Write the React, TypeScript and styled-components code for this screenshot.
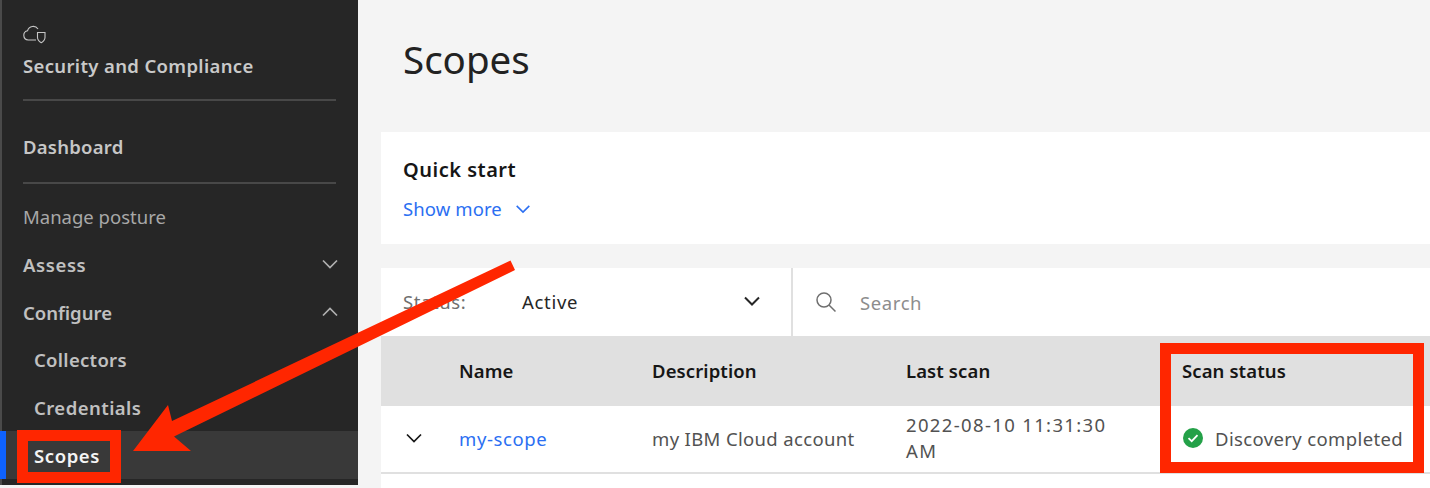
import React from 'react';
import styled, { createGlobalStyle } from 'styled-components';

const Global = createGlobalStyle`
  html, body { margin: 0; padding: 0; background: #fff; }
  body { font-family: "Noto Sans", "Open Sans", sans-serif; overflow: hidden; }
  * { box-sizing: border-box; }
`;
const Page = styled.div`
  position: relative; width: 1430px; height: 488px; display: flex; overflow: hidden; background: #f4f4f4;
`;
const Sidebar = styled.aside`
  width: 358px; height: 485px; flex: none; background: #262626; border-left: 2px solid #4a4a4a; color: #c6c6c6;
  display: flex; flex-direction: column;
`;
const Brand = styled.div`
  margin: 0 22px 0 21px; height: 101px; padding-top: 24px; border-bottom: 2px solid #484848; display: flex; flex-direction: column;
`;
const BrandIcon = styled.svg`width: 23px; height: 20px; display: block;`;
const BrandName = styled.div`font-size: 18.5px; font-weight: 600; line-height: 24px; margin-top: 10px; color: #c9c9c9; letter-spacing: .35px;`;
const DashWrap = styled.div`
  margin: 0 22px 0 21px; height: 83px; border-bottom: 2px solid #484848; display: flex; align-items: center; padding-top: 10px;
  font-size: 18.5px; font-weight: 600; color: #c6c6c6; letter-spacing: .25px;
`;
const NavList = styled.nav`display: flex; flex-direction: column; margin-top: 7px;`;
const NavRow = styled.div<{ $sub?: boolean; $active?: boolean; $plain?: boolean; $ls?: number }>`
  height: 48px; display: flex; align-items: center; justify-content: space-between;
  padding: ${p => (p.$sub ? 0 : 2)}px 18px 0 ${p => (p.$sub ? 32 : 21)}px;
  font-size: 18.5px; font-weight: ${p => (p.$plain ? 400 : 600)};
  letter-spacing: ${p => p.$ls ?? 0}px;
  color: ${p => (p.$active ? '#f4f4f4' : p.$plain ? '#a8a8a8' : '#c0c0c0')};
  background: ${p => (p.$active ? '#393939' : 'transparent')};
  ${p => p.$active && 'border-left: 6px solid #0f62fe; margin-left: -2px; padding-left: 28px;'}
`;
const Main = styled.main`flex: 1; min-width: 0; padding-left: 23px; display: flex; flex-direction: column;`;
const Title = styled.h1`
  margin: 0; height: 132px; padding: 36px 0 0 22px; font-size: 38.5px; font-weight: 400; line-height: 46px; color: #222;
`;
const Card = styled.section`
  height: 112px; background: #fff; padding: 24px 22px 0;
`;
const CardTitle = styled.div`font-size: 20px; font-weight: 600; line-height: 28px; color: #161616; letter-spacing: .5px;`;
const ShowMore = styled.div`
  display: flex; align-items: center; gap: 12px; margin-top: 12px; font-size: 18.5px; line-height: 26px; color: #2b6ff2; letter-spacing: .1px;
`;
const Toolbar = styled.div`
  margin-top: 24px; height: 68px; background: #fff; display: flex; align-items: center;
`;
const StatusBox = styled.div`
  width: 412px; height: 100%; border-right: 2px solid #e0e0e0; display: flex; align-items: center; padding: 0 29px 2px 22px;
`;
const StatusLabel = styled.span`width: 119px; font-size: 18.5px; color: #6f6f6f; letter-spacing: .6px;`;
const StatusValue = styled.span`flex: 1; font-size: 18.5px; color: #262626; letter-spacing: .7px;`;
const SearchBox = styled.div`display: flex; align-items: center; padding-left: 22px; gap: 23px; font-size: 18.5px; color: #8d8d8d; letter-spacing: .6px;`;
const grid = `display: grid; grid-template-columns: 78px 193px 254px 276px 1fr;`;
const HeadRow = styled.div`
  ${grid} height: 70px; background: #e0e0e0; font-size: 18.5px; font-weight: 600; color: #161616; align-items: center; padding-bottom: 2px; letter-spacing: .1px;
`;
const BodyRow = styled.div`
  ${grid} height: 68px; background: #fff; border-bottom: 2px solid #e0e0e0; font-size: 18.5px; color: #525252; align-items: center; padding-bottom: 2px;
`;
const Filler = styled.div`flex: 1; background: #fff;`;
const Expander = styled.div`display: flex; padding-left: 23px; color: #161616;`;
const ScopeLink = styled.span`color: #2b6ff2; letter-spacing: .6px;`;
const Description = styled.span`letter-spacing: .35px;`;
const ScanDate = styled.div`line-height: 26px; width: 225px; letter-spacing: 1.35px;`;
const Status = styled.div`display: flex; align-items: center; gap: 12px; letter-spacing: .37px; padding-left: 1px;`;
const Highlight = styled.div`position: absolute; border: 11px solid #ff2600; pointer-events: none;`;
const ScopesBox = styled(Highlight)`left: 17px; top: 430px; width: 104px; height: 53px;`;
const ScanBox = styled(Highlight)`left: 1160px; top: 343px; width: 264px; height: 130px;`;
const Arrow = styled.svg`position: absolute; left: 0; top: 0; width: 1430px; height: 488px; pointer-events: none;`;

const Chevron = ({ up, size = 20, color = 'currentColor', sw = 1.7 }: { up?: boolean; size?: number; color?: string; sw?: number }) => (
  <svg width={size} height={size} viewBox="0 0 20 20" fill="none" stroke={color} strokeWidth={sw}>
    <path d={up ? 'M3 13.500 10 6.500 17 13.500' : 'M3 6.500 10 13.500 17 6.500'} />
  </svg>
);

export default function App() {
  return (
    <Page>
      <Global />
      <Sidebar>
        <Brand>
          <BrandIcon viewBox="0 0 23 20" fill="none" stroke="#c6c6c6" strokeWidth="1.1">
            <path d="M13 16H5.200a4.700 4.700 0 0 1-.6-9.300A5.800 5.800 0 0 1 15 5" />
            <path d="M14.500 8.500h7.500v5c0 2.500-2 4.200-3.750 5.200-1.750-1-3.750-2.700-3.750-5.200z" />
          </BrandIcon>
          <BrandName>Security and Compliance</BrandName>
        </Brand>
        <DashWrap>Dashboard</DashWrap>
        <NavList>
          <NavRow $plain>Manage posture</NavRow>
          <NavRow $ls={0.6}>Assess<Chevron color="#b0b0b0" /></NavRow>
          <NavRow>Configure<Chevron up color="#b0b0b0" /></NavRow>
          <NavRow $sub $ls={0.3}>Collectors</NavRow>
          <NavRow $sub $ls={0.45}>Credentials</NavRow>
          <NavRow $sub $active $ls={0.6}>Scopes</NavRow>
        </NavList>
      </Sidebar>
      <Main>
        <Title>Scopes</Title>
        <Card>
          <CardTitle>Quick start</CardTitle>
          <ShowMore>Show more <Chevron size={18} color="#2b6ff2" /></ShowMore>
        </Card>
        <Toolbar>
          <StatusBox>
            <StatusLabel>Status:</StatusLabel>
            <StatusValue>Active</StatusValue>
            <Chevron color="#262626" sw={2} />
          </StatusBox>
          <SearchBox>
            <svg width="22" height="22" viewBox="0 0 22 22" fill="none" stroke="#6f6f6f" strokeWidth="1.5">
              <circle cx="9" cy="9" r="7" />
              <path d="M14 14l6.500 6.500" />
            </svg>
            Search
          </SearchBox>
        </Toolbar>
        <HeadRow>
          <span />
          <span>Name</span>
          <span>Description</span>
          <span>Last scan</span>
          <span>Scan status</span>
        </HeadRow>
        <BodyRow>
          <Expander><Chevron color="#161616" /></Expander>
          <ScopeLink>my-scope</ScopeLink>
          <Description>my IBM Cloud account</Description>
          <ScanDate>2022-08-10 11:31:30 AM</ScanDate>
          <Status>
            <svg width="20" height="20" viewBox="0 0 20 20">
              <circle cx="10" cy="10" r="10" fill="#24a148" />
              <path d="M5.500 10.200l3.200 3 5.800-6" fill="none" stroke="#fff" strokeWidth="1.800" />
            </svg>
            Discovery completed
          </Status>
        </BodyRow>
        <Filler />
      </Main>
      <ScopesBox />
      <ScanBox />
      <Arrow viewBox="0 0 1430 488">
        <path d="M510.500 260.500 L515 270 L174 436.500 L191 451 L133 451 L168 405 L172 421 Z" fill="#ff2600" />
      </Arrow>
    </Page>
  );
}
